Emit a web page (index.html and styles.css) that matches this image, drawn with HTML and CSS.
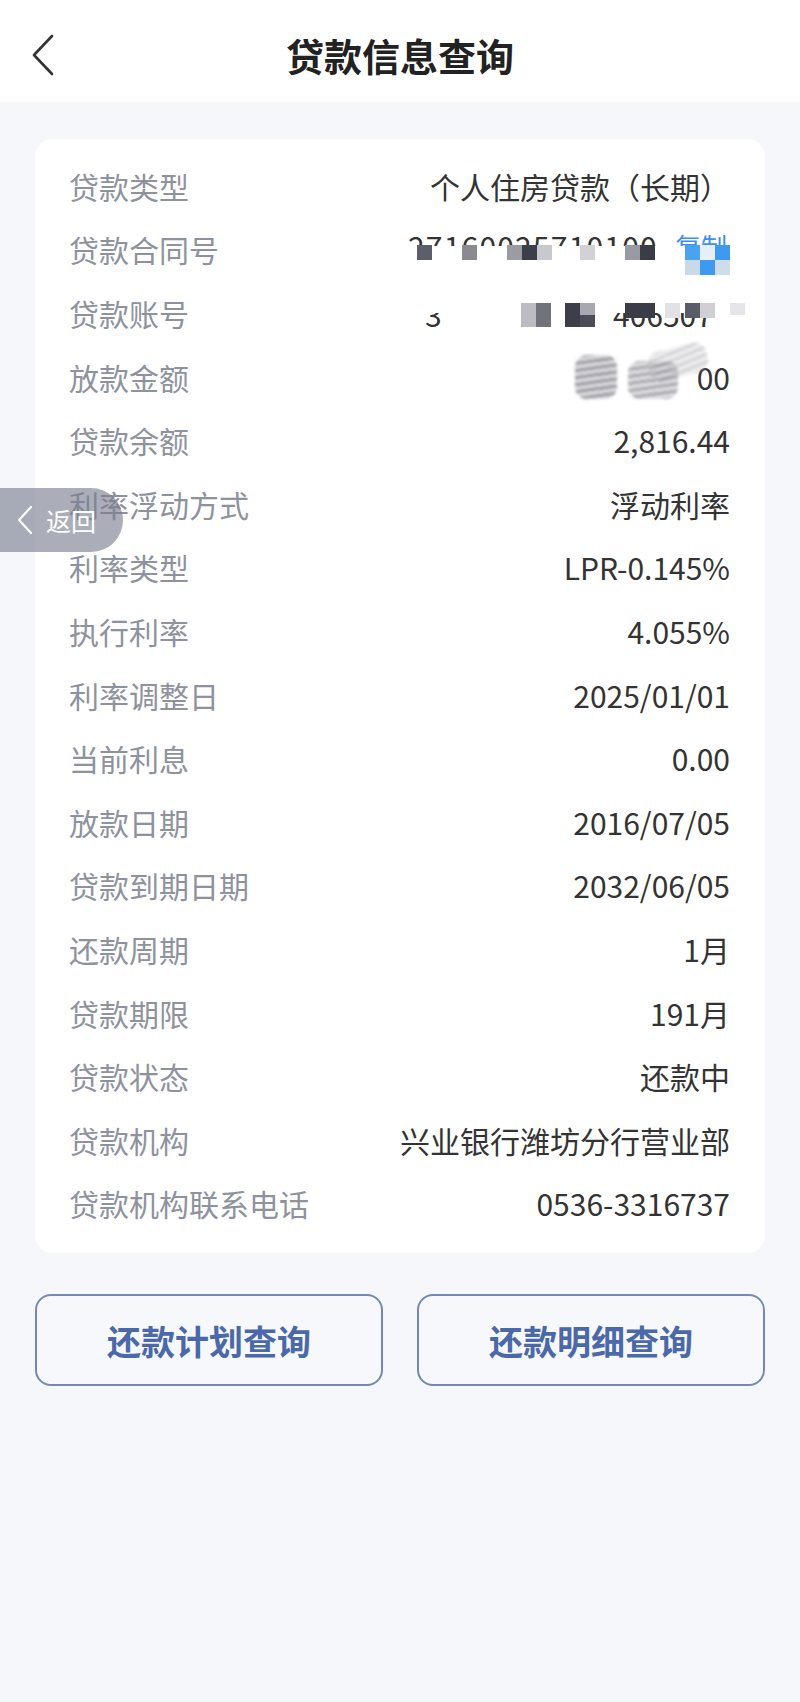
FILE: index.html
```html
<!DOCTYPE html>
<html lang="zh-CN">
<head>
<meta charset="utf-8">
<title>贷款信息查询</title>
<link rel="stylesheet" href="styles.css">
</head>
<body>
<header class="nav">
  <div class="nav-back">
    <svg class="chev" width="22" height="42" viewBox="0 0 22 42"><polyline points="20,2 2,21 20,40" fill="none" stroke="#333" stroke-width="2.6" stroke-linecap="round" stroke-linejoin="round"/></svg>
  </div>
  <h1 class="nav-title">贷款信息查询</h1>
  <div></div>
</header>
<main class="content">
  <section class="card">
    <div class="row"><span class="label">贷款类型</span><span class="value">个人住房贷款（长期）</span></div>
    <div class="row"><span class="label">贷款合同号</span>
      <span class="mask">
        <span class="clip c-top"><span class="clip-text digits">27160025710100</span></span>
        <span class="clip c-top copy"><span class="clip-text">复制</span></span>
        <i class="px a1"></i><i class="px a2"></i><i class="px a3"></i><i class="px a4"></i><i class="px a5"></i><i class="px a6"></i><i class="px a7"></i><i class="px a8"></i>
        <i class="px b1"></i><i class="px b2"></i><i class="px b3"></i><i class="px b4"></i><i class="px b5"></i><i class="px b6"></i>
      </span>
    </div>
    <div class="row"><span class="label">贷款账号</span>
      <span class="mask">
        <span class="clip c-bot first"><span class="clip-text">3</span></span>
        <span class="clip c-bot tail"><span class="clip-text">406507</span></span>
        <i class="px d1"></i><i class="px d2"></i><i class="px d3"></i><i class="px d4"></i><i class="px d5"></i><i class="px d6"></i><i class="px d7"></i><i class="px d8"></i><i class="px d9"></i><i class="px d10"></i>
      </span>
    </div>
    <div class="row"><span class="label">放款金额</span>
      <span class="mask">
        <span class="amount">00</span>
        <i class="smear s1"></i><i class="smear s2"></i><i class="smear s3"></i>
      </span>
    </div>
    <div class="row"><span class="label">贷款余额</span><span class="value">2,816.44</span></div>
    <div class="row"><span class="label">利率浮动方式</span><span class="value">浮动利率</span></div>
    <div class="row"><span class="label">利率类型</span><span class="value">LPR-0.145%</span></div>
    <div class="row"><span class="label">执行利率</span><span class="value">4.055%</span></div>
    <div class="row"><span class="label">利率调整日</span><span class="value">2025/01/01</span></div>
    <div class="row"><span class="label">当前利息</span><span class="value">0.00</span></div>
    <div class="row"><span class="label">放款日期</span><span class="value">2016/07/05</span></div>
    <div class="row"><span class="label">贷款到期日期</span><span class="value">2032/06/05</span></div>
    <div class="row"><span class="label">还款周期</span><span class="value">1月</span></div>
    <div class="row"><span class="label">贷款期限</span><span class="value">191月</span></div>
    <div class="row"><span class="label">贷款状态</span><span class="value">还款中</span></div>
    <div class="row"><span class="label">贷款机构</span><span class="value">兴业银行潍坊分行营业部</span></div>
    <div class="row"><span class="label">贷款机构联系电话</span><span class="value">0536-3316737</span></div>
  </section>
  <div class="actions">
    <button class="btn">还款计划查询</button>
    <button class="btn">还款明细查询</button>
  </div>
</main>
<div class="float-back">
  <svg width="16" height="30" viewBox="0 0 16 30"><polyline points="14,2 2,15 14,28" fill="none" stroke="#fff" stroke-width="2.2" stroke-linecap="round" stroke-linejoin="round"/></svg>
  <span>返回</span>
</div>
</body>
</html>
```
FILE: styles.css
```css
* { box-sizing: border-box; margin: 0; padding: 0; }
html, body { background: #f5f7fb; }
body {
  width: 800px;
  min-height: 1702px;
  position: relative;
  font-family: "Noto Sans CJK SC", "Noto Sans", sans-serif;
}

/* header */
.nav {
  height: 102px;
  padding-top: 8px;
  background: #fff;
  display: grid;
  grid-template-columns: 110px 1fr 110px;
  align-items: center;
}
.nav-back { padding-left: 32px; display: flex; align-items: center; }
.chev { display: block; }
.nav-title {
  text-align: center;
  font-size: 38px;
  font-weight: 700;
  color: #222;
  line-height: 1;
}

/* content */
.content { padding: 37px 35px 0; }
.card {
  background: #fff;
  border-radius: 18px;
  padding: 15px 35px 18px 34px;
}
.row {
  height: 63.6px;
  display: flex;
  align-items: center;
  justify-content: space-between;
  font-size: 30px;
  line-height: 1;
}
.label { color: #8e929e; white-space: nowrap; }
.value { color: #333; white-space: nowrap; }

/* redacted values */
.mask {
  position: relative;
  align-self: stretch;
  width: 330px;
}
.clip {
  position: absolute;
  overflow: hidden;
  display: block;
}
.clip-text {
  display: block;
  white-space: nowrap;
  font-size: 30px;
  line-height: 30px;
  color: #333;
}
.c-top { top: 17px; height: 11px; left: 8px; }
.c-top .clip-text { margin-top: -4px; }
.digits { letter-spacing: 1.2px; }
.copy { left: 275px; }
.copy .clip-text { color: #3d8ef0; font-size: 26px; }

.c-bot { top: 32px; height: 15px; }
.c-bot .clip-text { margin-top: -14px; }
.first { left: 25px; }
.tail { left: 213px; }

.px { position: absolute; display: block; width: 15px; height: 15px; }
/* row 2 mosaic (top rel to row) */
.a1 { left: 17px; top: 27px; background: #5c5e6a; }
.a2 { left: 62px; top: 27px; background: #8a8a90; }
.a3 { left: 107px; top: 27px; background: #9b9ba2; }
.a4 { left: 122px; top: 27px; background: #3c3e4a; }
.a5 { left: 137px; top: 27px; background: #c8c9cf; }
.a6 { left: 180px; top: 27px; background: #d2d2d6; }
.a7 { left: 225px; top: 27px; background: #9a9aa2; }
.a8 { left: 240px; top: 27px; background: #3a3c48; }
.b1 { left: 285px; top: 27px; background: #4aa3f0; }
.b2 { left: 300px; top: 27px; background: #e6eef7; }
.b3 { left: 315px; top: 27px; background: #3d9af0; }
.b4 { left: 285px; top: 42px; background: #c9d9ea; }
.b5 { left: 300px; top: 42px; background: #3d9af0; }
.b6 { left: 315px; top: 42px; background: #cfdcea; }
/* row 3 mosaic */
.d1 { left: 121px; top: 22px; height: 24px; background: #bcbcc2; }
.d2 { left: 136px; top: 22px; height: 24px; background: #72727c; }
.d3 { left: 165px; top: 22px; height: 24px; background: #3c3e4a; }
.d4 { left: 180px; top: 22px; height: 12px; background: #a8a8b0; }
.d5 { left: 180px; top: 34px; height: 12px; background: #4a4c58; }
.d6 { left: 225px; top: 22px; width: 30px; height: 15px; background: #3a3c48; }
.d7 { left: 265px; top: 22px; height: 15px; background: #e2e2e6; }
.d8 { left: 285px; top: 22px; height: 15px; background: #5a5c68; }
.d9 { left: 300px; top: 22px; height: 15px; background: #d0d0d4; }
.d10 { left: 330px; top: 22px; height: 12px; background: #e6e6ea; }
/* row 4 smear */
.amount {
  position: absolute;
  right: 0;
  top: 50%;
  transform: translateY(-50%);
  font-size: 30px;
  color: #333;
}
.smear {
  position: absolute;
  display: block;
  border-radius: 12px;
  filter: blur(1.6px);
  background: repeating-linear-gradient(172deg, #7f7f88 0 3px, #d2d2d7 3px 7px);
}
.s1 { left: 175px; top: 10px; width: 42px; height: 44px; opacity: 0.8; }
.s2 { left: 228px; top: 16px; width: 50px; height: 38px; opacity: 0.7; }
.s3 { left: 248px; top: 2px; width: 60px; height: 30px; opacity: 0.35; transform: rotate(-14deg); }

/* actions */
.actions {
  margin-top: 41px;
  display: grid;
  grid-template-columns: 1fr 1fr;
  gap: 34px;
}
.btn {
  height: 92px;
  border: 2px solid #7389b4;
  border-radius: 16px;
  background: #f6f8fc;
  color: #4b69a8;
  font-family: "Noto Sans CJK SC", "Noto Sans", sans-serif;
  font-size: 34px;
  font-weight: 700;
}

/* floating back pill */
.float-back {
  position: absolute;
  left: 0;
  top: 488px;
  width: 123px;
  height: 64px;
  border-radius: 0 32px 32px 0;
  background: rgba(120, 124, 142, 0.62);
  display: flex;
  align-items: center;
  gap: 13px;
  padding-left: 17px;
  color: #fff;
  font-size: 25px;
}
.float-back svg { display: block; }
```
